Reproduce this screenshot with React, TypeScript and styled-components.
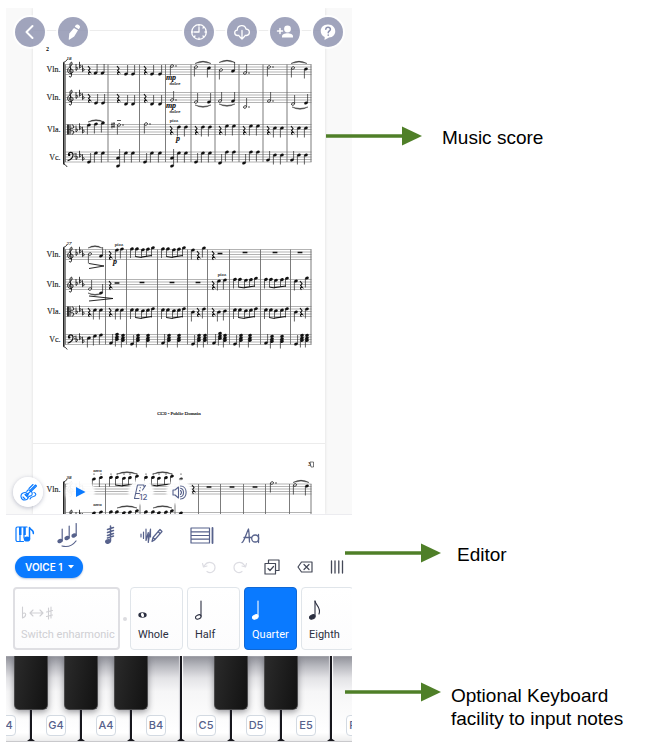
import React from 'react';
import styled, { createGlobalStyle, css } from 'styled-components';

const GlobalStyle = createGlobalStyle`
  * { box-sizing: border-box; }
  body { margin: 0; background: #fff; }
  button { font: inherit; color: inherit; border: 0; padding: 0; background: none; cursor: pointer; }
  svg { display: block; }
`;

const ink = '#57628c';
const blue = '#0a7aff';
const green = '#4f7f28';

const Page = styled.main`
  padding: 8px 0 12px 6px;
  font-family: Inter, Roboto, 'Liberation Sans', sans-serif;
`;

const Row = styled.section`
  display: grid;
  grid-template-columns: minmax(0, 346fr) minmax(0, 307fr);
`;

/* ---------- annotations ---------- */

const Callout = styled.aside<{ $top: number; $overlap: number; $gap: number }>`
  position: relative;
  z-index: 2;
  display: flex;
  align-items: flex-start;
  gap: ${p => p.$gap}px;
  margin-left: -${p => p.$overlap}px;
  padding-top: ${p => p.$top}px;
`;

const ArrowSvg = styled.svg`
  flex: none;
`;

const CalloutText = styled.p<{ $drop?: number }>`
  margin: ${p => p.$drop ?? 0}px 0 0;
  font: 19px/23px 'Liberation Sans', Arial, sans-serif;
  color: #000;
`;

const Arrow = () => (
  <ArrowSvg width="96" height="20" viewBox="0 0 96 20" aria-hidden="true">
    <path d="M0 10H78" stroke={green} strokeWidth="3.4" />
    <path d="M76 .5L96 10 76 19.5z" fill={green} />
  </ArrowSvg>
);

/* ---------- score viewport ---------- */

const ScoreArea = styled.div`
  position: relative;
  overflow: hidden;
  background: #f9f9f9;
`;

const Sheets = styled.div`
  margin: 0 27px;
  background: #fff;
  box-shadow: 0 0 3px #ddd;
`;

const SheetEnd = styled.div`
  height: 22px;
`;

const Sheet = styled.svg`
  width: 100%;
  height: auto;
  border-top: 1px solid #ececec;
  font-family: 'Liberation Serif', serif;
`;

const TopBar = styled.nav`
  position: absolute;
  inset: 9px 9px auto 9px;
  display: flex;
  justify-content: space-between;
`;

const BarGroup = styled.div`
  display: flex;
  gap: 13px;
`;

const RoundButton = styled.button`
  width: 30px;
  height: 30px;
  border-radius: 50%;
  display: grid;
  place-items: center;
  color: #fff;
  background: rgba(144, 149, 178, 0.85);
  box-shadow: 0 0 0 2px rgba(255, 255, 255, 0.8);
`;

const PlayBar = styled.div`
  position: absolute;
  inset: auto auto 7px 7px;
  display: flex;
  align-items: center;
  gap: 23px;
`;

const PlayTools = styled.div`
  display: flex;
  gap: 14px;
  padding-left: 12px;
`;

const FloatButton = styled.button<{ $size: number; $raised?: boolean }>`
  width: ${p => p.$size}px;
  height: ${p => p.$size}px;
  border-radius: 50%;
  display: grid;
  place-items: center;
  background: rgba(255, 255, 255, 0.95);
  color: ${p => (p.$raised ? blue : ink)};
  box-shadow: ${p => (p.$raised ? '0 1px 4px rgba(60, 70, 110, 0.35)' : '0 0 2px 1px rgba(255, 255, 255, 0.8)')};
`;

/* ---------- engraving ---------- */

type Kind = 'q' | 'h' | 'r' | 'w' | 'c';
type Mark = [Kind, number, number, (0 | 1)?, (0 | 1)?];

const Head = ({ x, y, open }: { x: number; y: number; open?: boolean }) => (
  <ellipse cx={x} cy={y} rx={open ? 1.6 : 1.9} ry={open ? 1.1 : 1.4} transform={`rotate(-22 ${x} ${y})`}
    fill={open ? '#fff' : '#111'} stroke="#111" strokeWidth={open ? 0.8 : 0} />
);

const Glyph = ({ mark: [kind, x, y, up, dot] }: { mark: Mark }) => {
  if (kind === 'r')
    return <path d={`M${x - 1} ${y - 4}l2 2.6-1.4 1.8 1.8 2.2c-2-.7-2.6.6-1 2.2`} fill="none" stroke="#111" strokeWidth="1.1" />;
  if (kind === 'w') return <path d={`M${x - 2.4} ${y}h4.8`} stroke="#111" strokeWidth="1.5" />;
  return (
    <g>
      <path d={up ? `M${x + 1.6} ${y}v-9` : `M${x - 1.6} ${y}v9.5`} stroke="#222" strokeWidth=".7" />
      <Head x={x} y={y} open={kind === 'h'} />
      {kind === 'c' && <><Head x={x} y={y - 2.6} /><Head x={x} y={y + 2.4} /></>}
      {dot ? <circle cx={x + 4} cy={y} r=".7" fill="#111" /> : null}
    </g>
  );
};

const Beamed = ({ xs, y }: { xs: number[]; y: number }) => {
  const ys = xs.map((_, i) => y + [0.4, 0.4, 1.2, 0.6, -0.8][i % 5]);
  const last = xs.length - 1;
  const low = y + 8;
  return (
    <g>
      {xs.map((x, i) => (
        <g key={x}>
          <path d={`M${x - 1.5} ${ys[i]}V${i === 0 ? low + 1.5 : low}`} stroke="#222" strokeWidth=".7" />
          <Head x={x} y={ys[i]} />
        </g>
      ))}
      <path d={`M${xs[1] - 1.8} ${low}L${xs[2] - 1.2} ${low + 1}M${xs[2] - 1.8} ${low + 0.6}L${xs[last] - 1.2} ${low - 1}`}
        stroke="#111" strokeWidth="1.2" />
    </g>
  );
};

const Slur = ({ x1, x2, y, below }: { x1: number; x2: number; y: number; below?: boolean }) => {
  const d = below ? 3 : -3;
  return (
    <path d={`M${x1} ${y}Q${(x1 + x2) / 2} ${y + d} ${x2} ${y}Q${(x1 + x2) / 2} ${y + d * 1.5} ${x1} ${y}`}
      fill="#222" stroke="#222" strokeWidth=".4" />
  );
};

const Treble = ({ y }: { y: number }) => (
  <path transform={`translate(70.5 ${y})`}
    d="M.2 7.4c-1.8.2-2-2.6.2-2.8 2.6-.1 3 3.8.2 4.3C-3 9.300-4 5.200-1.400 3 .4 1.400 2 .2 1.500-1.600 1.200-3.200-.6-1.800-.5.3L1 10.800c.2 2-2 2.200-2.300.900"
    fill="none" stroke="#111" strokeWidth="1" />
);

const Alto = ({ y }: { y: number }) => (
  <g transform={`translate(67 ${y})`} stroke="#111" fill="none">
    <path d="M1 0v10" strokeWidth="1.700" />
    <path d="M3 0v10M3 5l1.500-1.500c3 1.500 3-3.500.2-3M3 5l1.500 1.500c3-1.500 3 3.500.2 3" strokeWidth="1" />
  </g>
);

const Bass = ({ y }: { y: number }) => (
  <g transform={`translate(67 ${y})`}>
    <path d="M1.500 2.800C1.500-.2 6.200-.6 6 3 5.900 6 3.500 7.800.6 8.800" fill="none" stroke="#111" strokeWidth="1.200" />
    <circle cx="2.200" cy="2.900" r="1.200" /><circle cx="7.900" cy="1.800" r=".6" /><circle cx="7.900" cy="4.200" r=".6" />
  </g>
);

const Flats = ({ y }: { y: number }) => (
  <g fill="none" stroke="#111" strokeWidth=".8">
    {[[76, 0], [79.5, -2.2], [82.5, 1.2]].map(([x, dy]) => (
      <path key={x} d={`M${x} ${y + dy - 0.5}v6.500c2.500-1.500 2-4 0-2.600`} />
    ))}
  </g>
);

const Staff = ({ y, kind, label }: { y: number; kind: 'treble' | 'alto' | 'bass'; label: string }) => (
  <g>
    <path d={[0, 2.5, 5, 7.5, 10].map(d => `M65 ${y + d}H311.500`).join('')} stroke="#666" strokeWidth=".5" />
    <text x="60.500" y={y + 7.5} fontSize="8" textAnchor="end" fill="#222" stroke="#222" strokeWidth=".15">{label}</text>
    {kind === 'treble' && <Treble y={y} />}
    {kind === 'alto' && <Alto y={y} />}
    {kind === 'bass' && <Bass y={y} />}
    <Flats y={y + (kind === 'treble' ? 0 : 1.5)} />
  </g>
);

const Frame = ({ top, bottom, bars, number }: { top: number; bottom: number; bars: number[]; number: string }) => (
  <g>
    <path d={bars.map(x => `M${x} ${top}V${bottom}`).join('')} stroke="#444" strokeWidth=".7" />
    <path d={`M65.500 ${top}V${bottom}`} stroke="#333" strokeWidth=".6" />
    <path d={`M63.800 ${top - 2}V${bottom + 2}`} stroke="#222" strokeWidth="1.600" />
    <path d={`M63.200 ${top - 2}q2.500-.3 4-3M63.200 ${bottom + 2}q2.500.3 4 3`} fill="none" stroke="#222" strokeWidth=".9" />
    <text x="66.500" y={top - 5} fontSize="5" fontStyle="italic" stroke="#222" strokeWidth=".1">{number}</text>
  </g>
);

const Hairpin = ({ x1, x2, y }: { x1: number; x2: number; y: number }) => (
  <path d={`M${x1} ${y - 2.5}L${x2} ${y}L${x1} ${y + 2.5}`} fill="none" stroke="#111" strokeWidth=".9" />
);

const Word = ({ x, y, children, dynamic }: { x: number; y: number; children: string; dynamic?: boolean }) => (
  <text x={x} y={y} fontSize={dynamic ? 8 : 5} fontStyle={dynamic ? 'italic' : 'normal'}
    fontWeight={dynamic ? 700 : 400} textAnchor="middle" fill="#111" stroke="#111" strokeWidth=".1">{children}</text>
);

const firstSystem: Mark[] = [
  ['r', 89, 70], ['q', 95.5, 73, 1], ['q', 102.5, 73, 1], ['r', 118, 70], ['q', 126, 74, 1], ['q', 133, 74, 1],
  ['r', 145, 70], ['q', 152, 74, 1], ['q', 160, 74, 1], ['h', 172, 66, 0, 1], ['h', 196, 67], ['q', 209, 68],
  ['h', 221, 70], ['q', 233, 71, 1], ['h', 245, 73, 1, 1], ['h', 269, 67, 0, 1], ['h', 293, 68], ['q', 306, 69],
  ['r', 89, 98], ['q', 96, 103, 1], ['q', 103, 103, 1], ['r', 118, 98], ['q', 126, 104, 1], ['q', 133, 104, 1],
  ['r', 145, 98], ['q', 152, 104, 1], ['q', 160, 104, 1], ['h', 172, 100, 1, 1], ['h', 196, 102, 1], ['q', 209, 102, 1],
  ['h', 220, 101, 1], ['q', 233, 101, 1], ['h', 245, 107, 1, 1], ['h', 269, 101, 1, 1], ['h', 293, 104, 1], ['q', 306, 103, 1],
  ['q', 89, 125], ['q', 96, 124], ['q', 103, 123], ['h', 119, 125, 0, 1], ['h', 146, 124, 0, 1],
  ['r', 171, 130], ['q', 179, 127], ['q', 186, 127], ['r', 196, 130], ['q', 203, 127], ['q', 210, 127],
  ['r', 220, 130], ['q', 227, 126], ['q', 234, 126], ['r', 244, 130], ['q', 251, 126], ['q', 258, 126],
  ['r', 268, 130], ['q', 275, 128], ['q', 282, 128], ['r', 292, 130], ['q', 299, 128], ['q', 306, 128],
  ['q', 89, 162, 1], ['q', 96, 153], ['q', 103, 153], ['q', 118, 166, 1], ['q', 118, 158, 1], ['q', 126, 153], ['q', 133, 153],
  ['q', 145, 162, 1], ['q', 152, 153], ['q', 160, 153], ['q', 172, 166, 1], ['q', 172, 158, 1], ['q', 179, 153], ['q', 186, 153],
  ['q', 196, 162, 1], ['q', 203, 153], ['q', 210, 153], ['q', 220, 163, 1], ['q', 227, 152], ['q', 234, 152],
  ['q', 244, 163, 1], ['q', 251, 152], ['q', 258, 152], ['q', 268, 160, 1], ['q', 275, 155], ['q', 282, 155],
  ['q', 292, 160, 1], ['q', 299, 155], ['q', 306, 155],
];

const secondSystem: Mark[] = [
  ['h', 90, 254], ['q', 101, 256, 1], ['r', 110, 255], ['q', 117, 250], ['q', 122, 249],
  ['q', 193, 250], ['r', 198, 255], ['q', 204, 248], ['r', 213, 255], ['w', 220, 253.5], ['w', 245, 252.5], ['w', 275, 252.5], ['w', 300, 252.5],
  ['h', 90, 289, 1], ['q', 101, 293, 1], ['r', 110, 285], ['w', 117, 283], ['w', 142, 282.5], ['w', 172, 282.5], ['w', 198, 282.5],
  ['r', 213, 285], ['q', 219, 281], ['q', 225, 280], ['q', 296, 281], ['r', 301, 285], ['q', 307, 278],
  ['r', 89, 312], ['q', 95, 310], ['q', 101, 310], ['r', 110, 312], ['q', 117, 310], ['q', 122, 310],
  ['q', 193, 312], ['r', 198, 312], ['q', 204, 309], ['r', 213, 312], ['q', 219, 312], ['q', 225, 311],
  ['q', 296, 312], ['r', 301, 312], ['q', 307, 309],
  ['q', 89, 338], ['q', 95, 336], ['q', 101, 335], ['q', 111, 343, 1], ['c', 117, 337], ['c', 123, 338],
  ['q', 132, 344, 1], ['c', 138, 338], ['c', 148, 338], ['q', 163, 343, 1], ['c', 169, 338], ['c', 179, 338],
  ['q', 193, 344, 1], ['c', 199, 338], ['c', 205, 338], ['q', 214, 343, 1], ['c', 220, 336], ['c', 225, 338],
  ['q', 235, 344, 1], ['c', 241, 338], ['c', 250, 338], ['q', 266, 343, 1], ['c', 272, 339], ['c', 282, 339],
  ['q', 296, 344, 1], ['c', 302, 338], ['c', 307, 338],
];

const thirdSystem: Mark[] = [
  ['q', 94, 479], ['q', 101, 477.5], ['q', 181, 479], ['w', 209, 487], ['w', 232, 487], ['w', 255, 487], ['r', 193, 489],
  ['h', 272, 483, 0, 1], ['h', 295, 485], ['q', 307, 486],
  ['q', 94, 513], ['q', 101, 512], ['q', 181, 513],
];

const groupA = [132, 137, 143, 148, 153];
const groupB = [163, 168, 174, 179, 184];
const groupC = [235, 240, 246, 251, 256];
const groupD = [266, 271, 276, 282, 287];
const groupE = [111, 117, 124, 130, 137];
const groupF = [146, 153, 159, 166, 172];

const Marks = ({ list }: { list: Mark[] }) => <>{list.map((m, i) => <Glyph key={i} mark={m} />)}</>;

const PageTwo = () => (
  <Sheet viewBox="33 31 292 412" role="img" aria-label="Score, page 2">
    <text x="46" y="51" fontSize="6" fontWeight="700">2</text>
    <Frame top={64.5} bottom={162} bars={[108, 139.5, 165.5, 191, 215, 239, 263, 287, 311]} number="18" />
    <Staff y={64.5} kind="treble" label="Vln." />
    <Staff y={92.5} kind="treble" label="Vln." />
    <Staff y={124.5} kind="alto" label="Vla." />
    <Staff y={152} kind="bass" label="Vc." />
    <Marks list={firstSystem} />
    <Slur x1={195} x2={211} y={63.5} /><Slur x1={219} x2={235} y={62.5} /><Slur x1={291} x2={307} y={63.5} />
    <Slur x1={195} x2={211} y={105} below /><Slur x1={219} x2={235} y={104} below /><Slur x1={292} x2={308} y={107} below />
    <Slur x1={88} x2={104} y={122} />
    <path d="M112 122.500v6M114 122v6M111 124.500l4-1M111 127l4-1M117 120.500h4" stroke="#111" strokeWidth=".7" />
    <Word x={171} y={80} dynamic>mp</Word><Word x={175} y={85}>dolce</Word>
    <Word x={171} y={108} dynamic>mp</Word><Word x={175} y={113}>dolce</Word>
    <Word x={174} y={122}>pizz</Word><Word x={178} y={141} dynamic>p</Word>
    <Frame top={249.5} bottom={344.5} bars={[105.5, 126.5, 157.5, 187.5, 207.5, 229.5, 260.5, 290.5, 311]} number="27" />
    <Staff y={249.5} kind="treble" label="Vln." />
    <Staff y={279.5} kind="treble" label="Vln." />
    <Staff y={306.5} kind="alto" label="Vla." />
    <Staff y={334.5} kind="bass" label="Vc." />
    <Marks list={secondSystem} />
    {[groupA, groupB].map(g => <Beamed key={g[0]} xs={g} y={248.5} />)}
    {[groupC, groupD].map(g => <Beamed key={g[0]} xs={g} y={279} />)}
    {[groupA, groupB, groupC, groupD].map(g => <Beamed key={g[0]} xs={g} y={309.5} />)}
    <Slur x1={88} x2={102} y={248} /><Slur x1={88} x2={102} y={293} below />
    <Hairpin x1={89} x2={104} y={266} /><Hairpin x1={89} x2={113} y={298.5} />
    <Word x={119} y={246}>pizz</Word><Word x={115} y={264} dynamic>p</Word><Word x={222} y={276}>pizz</Word>
    <text x="179" y="415" fontSize="5" textAnchor="middle" fill="#111" stroke="#111" strokeWidth=".15">CC0 - Public Domain</text>
  </Sheet>
);

const PageThree = () => (
  <Sheet viewBox="33 444 292 70" role="img" aria-label="Score, page 3">
    <text x="308" y="466" fontSize="6" fontWeight="700">3</text>
    <path d="M310 462h3.500v5H311z" fill="#fff" stroke="#222" strokeWidth=".6" />
    <Frame top={484} bottom={520} bars={[105.5, 140, 175, 198.5, 220.5, 243.5, 265.5, 289.5, 311]} number="38" />
    <Staff y={484} kind="treble" label="Vln." />
    <Staff y={512.5} kind="treble" label="Vln." />
    <Marks list={thirdSystem} />
    {[groupE, groupF].map(g => (
      <g key={g[0]}>
        <Beamed xs={g} y={477} /><Slur x1={g[1]} x2={g[4]} y={474} />
        <Beamed xs={g} y={511.5} /><Slur x1={g[1]} x2={g[4]} y={508} />
      </g>
    ))}
    {[...groupE, ...groupF, 94, 101, 181].map(x => <circle key={x} cx={x} cy="474" r=".6" />)}
    <Slur x1={293} x2={309} y={482.5} />
    <Word x={97.5} y={472}>arco</Word><Word x={97.5} y={506}>arco</Word>
  </Sheet>
);

/* ---------- editor ---------- */

const Editor = styled.div`
  border-top: 1px solid #ececf0;
  overflow: hidden;
  background: #fff;
`;

const Tabs = styled.nav`
  display: flex;
  align-items: center;
  height: 40px;
  padding-left: 9px;
`;

const TabButton = styled.button<{ $active?: boolean; $width: number }>`
  flex: 0 1 ${p => p.$width}px;
  height: 32px;
  display: grid;
  place-items: center start;
  color: ${p => (p.$active ? blue : ink)};
`;

const Actions = styled.div`
  display: flex;
  align-items: center;
  justify-content: space-between;
  height: 24px;
  padding: 0 8px 0 9px;
`;

const VoiceButton = styled.button`
  display: flex;
  align-items: center;
  gap: 5px;
  height: 22px;
  padding: 0 9px 0 10px;
  border-radius: 11px;
  background: ${blue};
  color: #fff;
  font-size: 10px;
  font-weight: 600;
  box-shadow: 0 1px 2px rgba(10, 60, 140, 0.3);
`;

const ActionIcons = styled.div`
  display: flex;
  align-items: center;
  gap: 17px;
`;

const ActionButton = styled.button<{ $muted?: boolean }>`
  color: ${p => (p.$muted ? '#dddde3' : '#444857')};
`;

const Cards = styled.div`
  display: flex;
  align-items: center;
  gap: 4px;
  padding: 8px 0 6px 7px;
`;

const Card = styled.button<{ $state?: 'active' | 'off' }>`
  flex: 0 0 ${p => (p.$state === 'off' ? 107 : 53)}px;
  height: 63px;
  display: flex;
  flex-direction: column;
  align-items: flex-start;
  justify-content: flex-end;
  gap: 6px;
  padding: 0 0 7px 7px;
  border: 1px solid #e0e5ea;
  border-radius: 4px;
  background: linear-gradient(#fff, #fcfcfd);
  color: #2b2f40;
  font-family: Roboto, 'Liberation Sans', sans-serif;
  font-size: 11px;
  line-height: 14px;
  white-space: nowrap;
  ${p => p.$state === 'active' && css`
    background: ${blue};
    border-color: #1168d4;
    color: #fff;
  `}
  ${p => p.$state === 'off' && css`
    border: 2px solid #dfdfe3;
    color: #cfcfd3;
    padding: 0 0 6px 6px;
  `}
`;

const Divider = styled.span`
  flex: none;
  width: 4px;
  height: 4px;
  margin: 0 -1px;
  border-radius: 50%;
  background: #dcdce0;
`;

/* ---------- piano ---------- */

const Piano = styled.div`
  display: flex;
  overflow: hidden;
  height: 86px;
  border-bottom: 1px solid #c9c9cc;
`;

const Key = styled.div`
  position: relative;
  flex: 0 0 50px;
  &:first-child { margin-left: -24px; }
`;

const WhiteKey = styled.button`
  position: relative;
  width: 100%;
  height: 100%;
  display: flex;
  align-items: flex-end;
  justify-content: center;
  padding-bottom: 5px;
  background: linear-gradient(#8f9098 0, #b9bac0 12%, #e3e3e6 26%, #f6f6f7 42%, #fff 90%, #eee 100%);
  border-right: 2px solid #16161c;
  box-shadow: inset 1px 0 1px #fff, inset -1px 0 1px #d5d5da;
  &::after {
    content: '';
    position: absolute;
    right: -5px;
    bottom: 0;
    z-index: 1;
    border: 4px solid transparent;
    border-top: 0;
    border-bottom: 3px solid #16161c;
  }
`;

const BlackKey = styled.button`
  position: absolute;
  top: 0;
  right: -16px;
  z-index: 1;
  width: 34px;
  height: 54px;
  border: 1px solid #4b4b4d;
  border-top: 0;
  border-radius: 0 0 5px 5px;
  background: linear-gradient(100deg, #2b2b2b, #141414 90%);
  box-shadow: 0 2px 6px rgba(30, 30, 40, 0.45);
`;

const NoteName = styled.span`
  min-width: 20px;
  height: 21px;
  border: 1px solid #d3dae2;
  border-radius: 4px;
  background: #fff;
  color: ${ink};
  font-size: 11px;
  font-weight: 500;
  line-height: 19px;
  text-align: center;
`;

const keys = [
  { name: 'F4', sharp: true }, { name: 'G4', sharp: true }, { name: 'A4', sharp: true }, { name: 'B4', sharp: false },
  { name: 'C5', sharp: true }, { name: 'D5', sharp: true }, { name: 'E5', sharp: false }, { name: 'F5', sharp: false },
];

/* ---------- icons ---------- */

type IconProps = { w: number; h: number; children: React.ReactNode; sw?: number };
const Icon = ({ w, h, children, sw = 1.2 }: IconProps) => (
  <svg width={w} height={h} viewBox={`0 0 ${w} ${h}`} fill="none" stroke="currentColor" strokeWidth={sw}
    strokeLinecap="round" strokeLinejoin="round" aria-hidden="true">{children}</svg>
);

const fill = { fill: 'currentColor', stroke: 'none' };

const BackIcon = () => <Icon w={16} h={16} sw={2}><path d="M10.500 2L4.500 8l6 6" /></Icon>;
const PenIcon = () => (
  <Icon w={18} h={18}>
    <path {...fill} d="M10 5l4 2.300-3.800 6.200-4.900 3.300-.6-.4.600-5.900zM10.800 3.800l1-1.700c1.200-1.700 5 .4 4.100 2.300l-1.100 1.800z" />
  </Icon>
);
const ClockIcon = () => (
  <Icon w={18} h={18} sw={1.3}>
    <circle cx="9" cy="9" r="7.300" /><path d="M9 4.500V9H4.500M9 2v1M9 15v1M2 9h1M15 9h1M13.500 4.500l-.5.5M13.500 13.500l-.5-.5M4.500 13.500l.5-.5" />
  </Icon>
);
const CloudIcon = () => (
  <Icon w={18} h={18} sw={1.3}>
    <path d="M6 12.500H4.500C.8 12.300.9 7.500 4.200 7.200 4.300 1.500 12 1 13 6c4.500.4 4.300 6.300.5 6.500H12M9 7.500V16M6.500 13.500L9 16l2.500-2.500" />
  </Icon>
);
const PersonIcon = () => (
  <Icon w={18} h={18}>
    <circle cx="11.500" cy="6" r="3.400" {...fill} /><path {...fill} d="M6 14.500v-1.200c0-4 11-4 11 0v1.200z" />
    <path d="M1.500 8h5M4 5.500v5" strokeWidth="1.500" />
  </Icon>
);
const HelpIcon = () => (
  <Icon w={18} h={18}>
    <path {...fill} d="M9 1.500c9.500 0 9.500 13 1 13L5.500 17l.2-3C-.5 11.500.5 1.500 9 1.500z" />
    <path d="M6.800 6.200c.2-2.800 4.800-2.400 4.600.2-.1 1.500-2.200 1.600-2.200 3.400M9.200 12v.2" stroke="#8b90ae" strokeWidth="1.500" />
  </Icon>
);
const GuitarIcon = () => (
  <Icon w={17} h={17} sw={1.1}>
    <path d="M10 6.500L15.500 1l1 1L11 7.500M10.500 6.800C8.500 5 7 6 7 7.500c-.2 1.200-2 .8-4 1.500-3.500 1.500-2 7 1.500 7 3 .2 3.500-1.500 4-3 .5-1.200 2.500-.5 3.300-2 .6-1.300.2-3-.8-3.700M5 10.500l3 3M10.300 7.500l-4 4M14 8.500c3 1 1.800 3.500-.500 4-2 .3-3 .5-3.500 2.500" />
    <circle cx="7" cy="10.500" r="1.200" /><path d="M9 4.500l4-4M3 13l2 2" />
  </Icon>
);
const PlayIcon = () => <Icon w={12} h={12}><path d="M2 1l9.500 5L2 11z" fill={blue} stroke="none" /></Icon>;
const MetronomeIcon = () => (
  <Icon w={16} h={18} sw={1.1}>
    <path d="M6 15.500H1.500L4.500 2h6.200l.5 2M3 10.500h3.500M7 8l-.5-.5M7.300 4.500v.3M12.500 2.500L9.500 7" />
    <text x="6.200" y="17" fontSize="8" fontWeight="500" fontFamily="Inter, sans-serif" {...fill}>12</text>
  </Icon>
);
const SpeakerIcon = () => (
  <Icon w={15} h={15} sw={1.1}>
    <path d="M1 5h2L6.500 2v11L3 10H1zM8.500 5.500c1.200 1.200 1.200 2.800 0 4M8.500 3.200c4 .6 4 8 0 8.600M8.500 1c7.500 0 7.500 13 0 13" />
  </Icon>
);

const PianoTabIcon = () => (
  <Icon w={20} h={18}>
    <path d="M8.500 15.500h-6A1.500 1.500 0 011 14V2.500A1.500 1.500 0 012.500 1H12M5 9v6M9 9v3" />
    <path {...fill} d="M4 1h2.500v8H4zM8.300 1h2.500v8H8.300z" />
    <path d="M14.500 13V1.500c.5 2.500 4.500 2 3.800 6" strokeWidth="1.500" /><ellipse cx="12" cy="13" rx="3.200" ry="2.600" {...fill} />
  </Icon>
);
const SlurTabIcon = () => (
  <Icon w={22} h={26}>
    {[[3, 19], [10, 16], [17, 13.5]].map(([x, y]) => (
      <g key={x}><ellipse cx={x} cy={y} rx="2.700" ry="2" transform={`rotate(-20 ${x} ${y})`} {...fill} /><path d={`M${x + 2.2} ${y}V${y - 12}`} /></g>
    ))}
    <path d="M5 24c6 1.500 11-1 14-5" />
  </Icon>
);
const TremoloTabIcon = () => (
  <Icon w={12} h={20}>
    <ellipse cx="4" cy="16.500" rx="3" ry="2.300" transform="rotate(-20 4 16.500)" {...fill} />
    <path d="M6.500 16V1M3.500 4.500l6-2M3.500 7.500l6-2M3.500 10.500l6-2M3.500 13l6-2" strokeWidth="1.500" />
  </Icon>
);
const DrawTabIcon = () => (
  <Icon w={23} h={18}>
    <path d="M1 8v3M3.500 6v6.500M6 3v11.500l2.300-8v10L10.500 3v8M12 15.500l1-4L20 3.500l2 2-7.500 8.500zM18 5.500l2 2M13 11.500l1.800 2" />
  </Icon>
);
const StaffTabIcon = () => (
  <Icon w={24} h={17}>
    <path d="M1 1h18.500v15H1zM1 4.800h18.500M1 8.500h18.500M1 12.200h18.500" /><path d="M22.500 1v15" strokeWidth="1.800" />
  </Icon>
);
const TextTabIcon = () => (
  <Icon w={19} h={17} sw={1.3}>
    <path d="M1 15.500c2-1 3.500-7 6.500-13.500.7 4 .7 9 1 13M3 10.500h7.500M17.500 7.500v8" /><circle cx="14.200" cy="11.500" r="3.500" />
  </Icon>
);

const UndoIcon = ({ flip }: { flip?: boolean }) => (
  <Icon w={14} h={14}>
    <path transform={flip ? 'translate(14 0) scale(-1 1)' : undefined}
      d="M5 11.500c3.500 2.500 8 0 8-4 0-5-7-7.500-10.500-2L2 6.500M.5 3.500l1 3.500 3.500-1" />
  </Icon>
);
const SelectIcon = () => (
  <Icon w={16} h={16}><path d="M1 4.500h10.500V15H1zM4.500 4V1H15v10.500h-3M4 9.500l2 2 3.500-4" /></Icon>
);
const DeleteIcon = () => (
  <Icon w={16} h={12}><path d="M4.500 1H15v10H4.500L1 6zM7 3.500l5 5M12 3.500l-5 5" /></Icon>
);
const MoreIcon = () => <Icon w={14} h={14} sw={1.3}><path d="M1.500 1v12M5 1v12M8.800 1v12M12.500 1v12" /></Icon>;

const EnharmonicIcon = () => (
  <Icon w={34} h={18} sw={1.1}>
    <path d="M1.500 3v11c4-1.500 4.500-6.500 0-4.500M9 9h13M12 6L9 9l3 3M19 6l3 3-3 3M27.500 4v11M30 3v11M25.500 8l6-1.500M25.500 12.500l6-1.500" />
  </Icon>
);
const WholeIcon = () => (
  <Icon w={12} h={20}>
    <ellipse cx="4.500" cy="13" rx="4.200" ry="2.700" {...fill} />
    <ellipse cx="4.500" cy="13" rx="1.500" ry="2.200" fill="#fff" stroke="none" transform="rotate(-20 4.500 13)" />
  </Icon>
);
const NoteIcon = ({ open, flag }: { open?: boolean; flag?: boolean }) => (
  <Icon w={14} h={22} sw={1.1}>
    <ellipse cx="3.300" cy="17" rx="2.900" ry="2" transform="rotate(-25 3.300 17)" fill={open ? 'none' : 'currentColor'} />
    <path d="M6 16V1" />
    {flag && <path d="M6 1c.5 4 6.500 6.500 4 13" />}
  </Icon>
);

export default function App() {
  return (
    <>
      <GlobalStyle />
      <Page>
        <Row>
          <ScoreArea>
            <Sheets>
              <SheetEnd />
              <PageTwo />
              <PageThree />
            </Sheets>
            <TopBar aria-label="Score actions">
              <BarGroup>
                <RoundButton aria-label="Back"><BackIcon /></RoundButton>
                <RoundButton aria-label="Edit"><PenIcon /></RoundButton>
              </BarGroup>
              <BarGroup>
                <RoundButton aria-label="History"><ClockIcon /></RoundButton>
                <RoundButton aria-label="Download"><CloudIcon /></RoundButton>
                <RoundButton aria-label="Invite"><PersonIcon /></RoundButton>
                <RoundButton aria-label="Help"><HelpIcon /></RoundButton>
              </BarGroup>
            </TopBar>
            <PlayBar>
              <FloatButton $size={30} $raised aria-label="Instruments"><GuitarIcon /></FloatButton>
              <FloatButton $size={28} aria-label="Play"><PlayIcon /></FloatButton>
              <PlayTools>
                <FloatButton $size={24} aria-label="Metronome"><MetronomeIcon /></FloatButton>
                <FloatButton $size={24} aria-label="Volume"><SpeakerIcon /></FloatButton>
              </PlayTools>
            </PlayBar>
          </ScoreArea>
          <Callout $top={118} $overlap={26} $gap={20}>
            <Arrow />
            <CalloutText>Music score</CalloutText>
          </Callout>
        </Row>

        <Row>
          <Editor>
            <Tabs aria-label="Editor tools">
              <TabButton $width={42} $active aria-label="Notes"><PianoTabIcon /></TabButton>
              <TabButton $width={47} aria-label="Articulations"><SlurTabIcon /></TabButton>
              <TabButton $width={36} aria-label="Ornaments"><TremoloTabIcon /></TabButton>
              <TabButton $width={50} aria-label="Drawing"><DrawTabIcon /></TabButton>
              <TabButton $width={51} aria-label="Measures"><StaffTabIcon /></TabButton>
              <TabButton $width={42} aria-label="Text"><TextTabIcon /></TabButton>
            </Tabs>
            <Actions>
              <VoiceButton>
                VOICE 1
                <Icon w={6} h={4}><path {...fill} d="M0 0h6L3 3.500z" /></Icon>
              </VoiceButton>
              <ActionIcons>
                <ActionButton $muted aria-label="Undo"><UndoIcon /></ActionButton>
                <ActionButton $muted aria-label="Redo"><UndoIcon flip /></ActionButton>
                <ActionButton aria-label="Select"><SelectIcon /></ActionButton>
                <ActionButton aria-label="Delete"><DeleteIcon /></ActionButton>
                <ActionButton aria-label="More"><MoreIcon /></ActionButton>
              </ActionIcons>
            </Actions>
            <Cards>
              <Card $state="off" disabled><EnharmonicIcon />Switch enharmonic</Card>
              <Divider />
              <Card><WholeIcon />Whole</Card>
              <Card><NoteIcon open />Half</Card>
              <Card $state="active"><NoteIcon />Quarter</Card>
              <Card><NoteIcon flag />Eighth</Card>
            </Cards>
          </Editor>
          <Callout $top={29} $overlap={7} $gap={16}>
            <Arrow />
            <CalloutText>Editor</CalloutText>
          </Callout>
        </Row>

        <Row>
          <Piano>
            {keys.map(k => (
              <Key key={k.name}>
                <WhiteKey><NoteName>{k.name}</NoteName></WhiteKey>
                {k.sharp && <BlackKey aria-label={`${k.name} sharp`} />}
              </Key>
            ))}
          </Piano>
          <Callout $top={26} $overlap={7} $gap={10}>
            <Arrow />
            <CalloutText $drop={2}>Optional Keyboard<br />facility to input notes</CalloutText>
          </Callout>
        </Row>
      </Page>
    </>
  );
}
